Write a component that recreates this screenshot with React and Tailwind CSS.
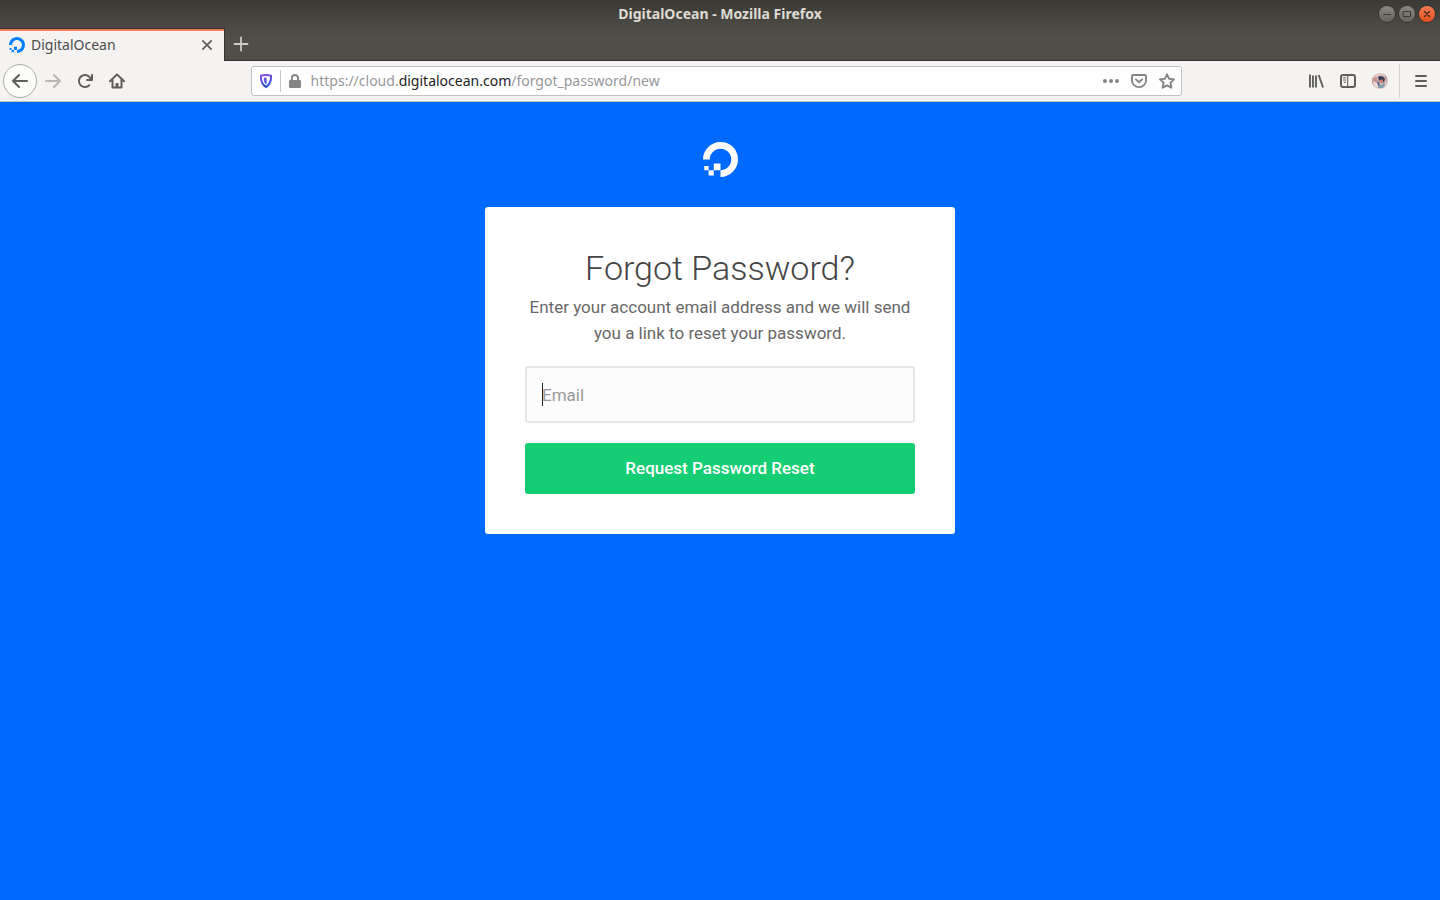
const UI_FONT = "font-['Noto_Sans','Open_Sans',sans-serif]";

function OceanLogo({ className }) {
  return (
    <svg viewBox="0 0 24 24" fill="currentColor" aria-hidden="true" className={className}>
      <path d="M12.04 0C5.408-.02.005 5.37.005 11.992h4.638c0-4.923 4.882-8.731 10.064-6.855a6.95 6.95 0 014.147 4.148c1.889 5.177-1.924 10.055-6.84 10.064v-4.61H7.391v4.623h4.61V24c7.86 0 13.967-7.588 11.397-15.83-1.115-3.59-3.985-6.446-7.577-7.575A12.8 12.8 0 0012.039 0zM7.39 19.362H3.828v3.564H7.39zm-3.563 0v-2.978H.85v2.978z" />
    </svg>
  );
}

function Icon({ children, className = "size-4" }) {
  return (
    <svg viewBox="0 0 16 16" fill="none" stroke="currentColor" strokeWidth="2" strokeLinecap="round" strokeLinejoin="round" aria-hidden="true" className={className}>
      {children}
    </svg>
  );
}

function ToolButton({ label, className = "w-8", children, ...rest }) {
  return (
    <button type="button" aria-label={label} className={`flex h-8 shrink-0 items-center justify-center ${className}`} {...rest}>
      {children}
    </button>
  );
}

function TitleBar() {
  return (
    <div className="relative flex h-7 items-center justify-center bg-linear-to-b from-[#3a3934] to-[#4b4943] to-90%">
      <h1 className="text-sm font-bold text-[#dfdbd2]">DigitalOcean - Mozilla Firefox</h1>
      <div className="absolute inset-y-0 right-[5px] flex items-center gap-1">
        <button type="button" aria-label="Minimize" className="flex size-4 items-center justify-center rounded-full bg-linear-to-b from-[#8a8881] to-[#65635c] text-[#3a3833] ring-1 ring-[#35342f]">
          <Icon><path d="M4 8.500h8" strokeWidth="1" strokeLinecap="butt" /></Icon>
        </button>
        <button type="button" aria-label="Maximize" className="flex size-4 items-center justify-center rounded-full bg-linear-to-b from-[#8a8881] to-[#65635c] text-[#3a3833] ring-1 ring-[#35342f]">
          <Icon><path d="M4.500 5.500h7v5h-7z" strokeWidth="1" strokeLinejoin="miter" /></Icon>
        </button>
        <button type="button" aria-label="Close window" className="flex size-4 items-center justify-center rounded-full bg-linear-to-b from-[#f47b52] to-[#e2501b] text-[#3f2a1e] ring-1 ring-[#35342f]">
          <Icon><path d="M5.500 5.500l5 5m0-5l-5 5" strokeWidth="1.300" /></Icon>
        </button>
      </div>
    </div>
  );
}

function TabStrip() {
  return (
    <div className="flex h-[33px] bg-linear-to-b from-[#4b4943] to-[#504e47] to-30%">
      <div className="flex w-[225px] items-center border-t border-r border-[#35342f] bg-[#f4f3f1]">
        <div className="flex h-full flex-1 items-center border-t-2 border-[#f27e55] pr-2 pb-0.5 pl-[9px]">
          <OceanLogo className="mr-1.5 size-4 text-[#0080ff]" />
          <span className="flex-1 text-sm text-[#4c4c4c]">DigitalOcean</span>
          <button type="button" aria-label="Close tab" className="flex size-[18px] items-center justify-center text-[#5c5b58]">
            <Icon><path d="M3.800 3.800l8.400 8.400m0-8.400l-8.400 8.400" strokeWidth="1.700" /></Icon>
          </button>
        </div>
      </div>
      <div className="flex flex-1 border-b border-[#35342f]">
        <button type="button" aria-label="Open a new tab" className="flex w-8 items-center justify-center text-[#cfcdc8]">
          <Icon><path d="M8 1.500v13M1.500 8h13" strokeWidth="1.800" /></Icon>
        </button>
      </div>
    </div>
  );
}

function AddressBar() {
  return (
    <div className="flex h-[30px] min-w-0 flex-[55] items-center rounded-[3px] border border-[#c3c1be] bg-white pl-1.5">
      <svg viewBox="0 0 16 16" className="size-4 shrink-0" role="img" aria-label="Tracking protection">
        <defs>
          <linearGradient id="shield" x1="0" y1="0" x2="0.300" y2="1">
            <stop offset="0" stopColor="#8b4be8" />
            <stop offset="1" stopColor="#2f55d4" />
          </linearGradient>
        </defs>
        <path d="M8 1.900c1.900 0 3.600.3 5.100.9.100 3.400 0 8.400-5.100 11.200C2.900 11.200 2.800 6.200 2.900 2.800 4.400 2.200 6.100 1.900 8 1.900z" fill="none" stroke="url(#shield)" strokeWidth="2" strokeLinejoin="round" />
        <path d="M8.500 4.600v7C6.300 10.400 5.900 7.900 5.800 5c.9-.3 1.700-.4 2.700-.4z" fill="url(#shield)" />
      </svg>
      <span className="mx-1.5 h-[22px] w-px bg-[#c9c8c6]" />
      <svg viewBox="0 0 16 16" className="size-4 shrink-0 text-[#868583]" role="img" aria-label="Secure connection">
        <rect x="2" y="7" width="12" height="8" rx="1.200" fill="currentColor" />
        <path d="M4.900 7.500V5.100a3.100 3.100 0 0 1 6.200 0v2.400" fill="none" stroke="currentColor" strokeWidth="2" />
      </svg>
      <a href="https://cloud.digitalocean.com/forgot_password/new" className="ml-2 min-w-0 flex-1 truncate text-sm text-[#97979a]">
        https://cloud.<span className="text-[#1c1c1e]">digitalocean.com</span>/forgot_password/new
      </a>
      <div className="flex text-[#858482]">
        <ToolButton label="Page actions" className="w-7">
          <Icon><g fill="currentColor" stroke="none"><circle cx="2" cy="8" r="2" /><circle cx="8" cy="8" r="2" /><circle cx="14" cy="8" r="2" /></g></Icon>
        </ToolButton>
        <ToolButton label="Save to Pocket" className="w-7">
          <Icon><path d="M2 2h12a1 1 0 0 1 1 1v4.500a7 6.600 0 0 1-14 0V3a1 1 0 0 1 1-1z" strokeWidth="1.900" /><path d="M4.900 6.400L8 9.300l3.100-2.900" strokeWidth="1.900" /></Icon>
        </ToolButton>
        <ToolButton label="Bookmark this page" className="w-7">
          <Icon><path d="M8 1.300l2.100 4.500 4.900.6-3.600 3.400 1 4.900L8 12.300l-4.400 2.400 1-4.900L1 6.400l4.900-.6z" strokeWidth="1.900" /></Icon>
        </ToolButton>
      </div>
    </div>
  );
}

function Avatar() {
  return (
    <svg viewBox="0 0 16 16" className="size-4" aria-hidden="true">
      <defs><clipPath id="face"><circle cx="8" cy="8" r="8" /></clipPath></defs>
      <g clipPath="url(#face)">
        <path d="M0 0h16v16H0z" fill="#dfc3c0" />
        <path d="M0 5l5-1 1 5-3 5-3-2z" fill="#c9908f" />
        <path d="M1 8l4 2 1 4-4-1z" fill="#f0dedb" />
        <path d="M6 4c2-2 6-1 7 2l-1 4-2-3-3 1z" fill="#3c3c58" />
        <path d="M7.500 7l3-.5.800 2.500-2 1.800-1.600-1.300z" fill="#c98474" />
        <path d="M7 12l3 0 2-3 1 3-2 3H6z" fill="#7f9fb5" />
        <path d="M5 8l2 1 1 3-2 1z" fill="#586a92" />
        <path d="M12 2l3 2v5l-1-1z" fill="#c5a2a4" />
      </g>
    </svg>
  );
}

function NavigationBar() {
  return (
    <div className="flex h-[41px] items-center border-b border-[#c9c8c5] bg-[#f4f3f1] text-[#5f5e5c]">
      <button type="button" aria-label="Back" className="ml-[3px] flex size-[34px] shrink-0 items-center justify-center rounded-full border border-[#acaba8] bg-[#fcfcfb]">
        <Icon><path d="M15 8H1.500M7 2L1 8l6 6" /></Icon>
      </button>
      <ToolButton label="Forward" disabled>
        <Icon className="size-4 text-[#b9b8b5]"><path d="M1 8h13.500M9 2l6 6-6 6" /></Icon>
      </ToolButton>
      <ToolButton label="Reload">
        <Icon><path fill="currentColor" stroke="none" d="M15 1a1 1 0 0 0-1 1v2.418A6.995 6.995 0 1 0 8 15a6.954 6.954 0 0 0 4.950-2.050 1 1 0 0 0-1.414-1.414A5.019 5.019 0 1 1 12.549 6H10a1 1 0 0 0 0 2h5a1 1 0 0 0 1-1V2a1 1 0 0 0-1-1z" /></Icon>
      </ToolButton>
      <ToolButton label="Home">
        <Icon><path d="M1 8.300L8 1.400l7 6.900M3.500 7v7.500h9V7" /><path d="M7.100 14.500v-4h1.800v4z" strokeWidth="1.200" fill="currentColor" /></Icon>
      </ToolButton>
      <span className="flex-[7]" />
      <AddressBar />
      <span className="flex-[7]" />
      <ToolButton label="Library">
        <Icon><path d="M2 1.500v13M5 2.500v12M8 2.500v12M10.700 2l4.300 12.500" strokeWidth="1.900" strokeLinecap="butt" /></Icon>
      </ToolButton>
      <ToolButton label="Sidebars">
        <Icon><rect x="1" y="2" width="14" height="12" rx="2" /><path d="M7.700 2v12M3 4.800h3M3 7h3M3.800 9.200H6" strokeWidth="1.100" strokeLinecap="butt" /></Icon>
      </ToolButton>
      <ToolButton label="Account"><Avatar /></ToolButton>
      <span className="ml-[3px] h-[34px] w-px bg-[#d5d4d2]" />
      <ToolButton label="Open menu" className="mr-px ml-[3px] w-9">
        <Icon><path d="M3 3h10M3 8h10M3 13h10" /></Icon>
      </ToolButton>
    </div>
  );
}

function ForgotPasswordCard() {
  return (
    <form onSubmit={(e) => e.preventDefault()} className="w-full max-w-[470px] rounded-[3px] bg-white p-10 text-center">
      <h2 className="text-[34px] leading-[42px] font-light text-[#444]">Forgot Password?</h2>
      <p className="mt-[5px] text-[17px] leading-[26px] text-[#676767]">
        Enter your account email address and we will send you a link to reset your password.
      </p>
      <div className="relative mt-5">
        <input id="email" type="email" aria-label="Email" placeholder="Email" className="block h-[57px] w-full rounded-[3px] border-2 border-[#e5e5e5] bg-[#fcfcfc] px-[15px] text-[17px] text-[#333] outline-none placeholder:text-[#999]" />
        <span aria-hidden="true" className="absolute top-[17px] left-[17px] h-[23px] w-px bg-[#222]" />
      </div>
      <button type="submit" className="mt-5 h-[51px] w-full rounded-[3px] bg-[#15cd72] text-[17px] font-medium text-white">
        Request Password Reset
      </button>
    </form>
  );
}

export default function App() {
  return (
    <div className="flex min-h-screen flex-col">
      <header className={UI_FONT}>
        <TitleBar />
        <TabStrip />
        <NavigationBar />
      </header>
      <main className="flex flex-1 flex-col items-center bg-[#0069ff] px-4 pt-10 pb-10 font-['Roboto',sans-serif]">
        <a href="/" aria-label="DigitalOcean" className="mb-[30px] text-white">
          <OceanLogo className="size-[35px]" />
        </a>
        <ForgotPasswordCard />
      </main>
    </div>
  );
}
